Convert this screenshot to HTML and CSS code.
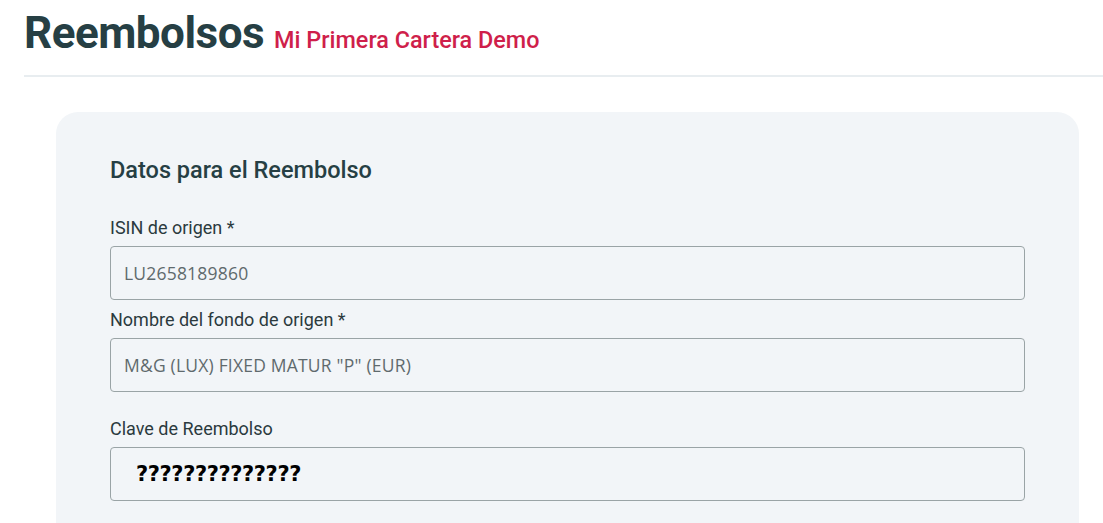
FILE: index.html
```html
<!DOCTYPE html>
<html lang="es">
<head>
<meta charset="utf-8">
<title>Reembolsos</title>
<link rel="stylesheet" href="styles.css">
</head>
<body>
<header class="page-header">
  <h1 class="title">Reembolsos</h1>
  <span class="subtitle">Mi Primera Cartera Demo</span>
</header>
<main class="content">
  <section class="card">
    <h2 class="card-title">Datos para el Reembolso</h2>
    <div class="field">
      <label class="label">ISIN de origen *</label>
      <div class="input">LU2658189860</div>
    </div>
    <div class="field">
      <label class="label">Nombre del fondo de origen *</label>
      <div class="input">M&amp;G (LUX) FIXED MATUR "P" (EUR)</div>
    </div>
    <div class="field field-gap">
      <label class="label">Clave de Reembolso</label>
      <div class="input input-key">??????????????</div>
    </div>
  </section>
</main>
</body>
</html>
```
FILE: styles.css
```css
html, body {
  margin: 0;
  padding: 0;
  background: #ffffff;
  overflow: hidden;
}
body {
  font-family: "Roboto", "Liberation Sans", sans-serif;
  color: #263f44;
}
.page-header {
  display: flex;
  align-items: baseline;
  gap: 10px;
  margin-left: 24px;
  padding-top: 5px;
  height: 77px;
  box-sizing: border-box;
  border-bottom: 2px solid #e8edf0;
}
.title {
  margin: 0;
  font-size: 44px;
  font-weight: 700;
  letter-spacing: -0.5px;
  color: #263f44;
  line-height: 56px;
}
.subtitle {
  font-size: 23.4px;
  font-weight: 500;
  color: #cf1f4b;
}
.content {
  padding: 35px 24px 0 56px;
}
.card {
  background: #f2f5f8;
  border-radius: 22px 22px 0 0;
  width: 1023px;
  box-sizing: border-box;
  padding: 44px 54px 40px 54px;
  height: 420px;
}
.card-title {
  margin: 0 0 32px;
  font-size: 23.5px;
  font-weight: 500;
  line-height: 28px;
  color: #263f44;
}
.field {
  display: flex;
  flex-direction: column;
  gap: 7px;
  margin-bottom: 8px;
}
.field-gap {
  margin-top: 25px;
}
.label {
  font-size: 18px;
  line-height: 23px;
  color: #2b3a3e;
}
.input {
  height: 54px;
  box-sizing: border-box;
  border: 1px solid #9aa4a6;
  border-radius: 4px;
  padding: 0 13px;
  display: flex;
  align-items: center;
  font-family: "Open Sans", "Liberation Sans", sans-serif;
  font-size: 17.5px;
  letter-spacing: 0.2px;
  color: #5f6a6d;
  width: 915px;
}
.input-key {
  font-family: "DejaVu Sans", sans-serif;
  font-weight: 700;
  font-size: 21px;
  letter-spacing: -0.4px;
  color: #000;
  padding-left: 25px;
}
```
